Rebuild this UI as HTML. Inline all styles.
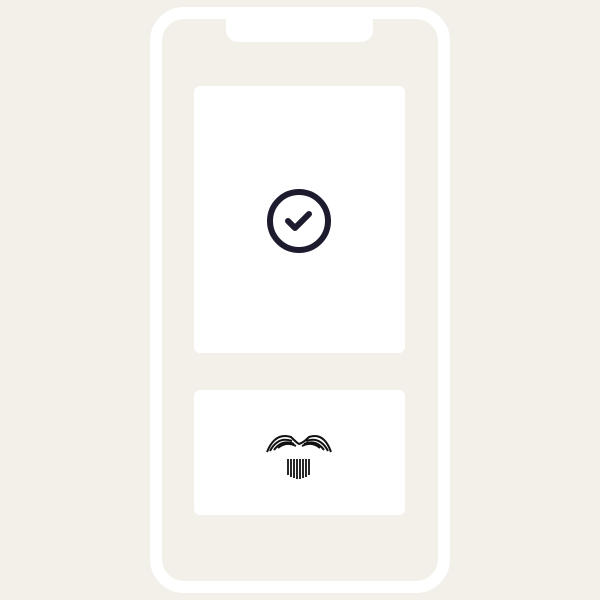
<!DOCTYPE html>
<html><head><style>
body{margin:0;width:600px;height:600px;background:#f3efe9;position:relative;overflow:hidden}
.phone{position:absolute;left:150px;top:7px;width:276px;height:562px;border:12px solid #fff;border-radius:34px;}
.notch{position:absolute;left:226px;top:19px;width:147px;height:23px;background:#fff;border-radius:0 0 12px 12px}
.c{position:absolute;background:#fff;border-radius:6px}
</style></head><body>
<div class="phone"></div>
<div class="notch"></div>
<div class="c" style="left:194px;top:86px;width:211px;height:267px"></div>
<div class="c" style="left:194px;top:390px;width:211px;height:125px"></div>
<svg style="position:absolute;left:0;top:0" width="600" height="600">
<circle cx="299" cy="221" r="29" fill="none" stroke="#1d1b2e" stroke-width="6"/>
<path d="M288 221 L295 228 L309 214" fill="none" stroke="#1d1b2e" stroke-width="6" stroke-linecap="round" stroke-linejoin="round"/>
<g fill="none" stroke="#111" stroke-width="2">
<path d="M267 452 Q275 432 291 437 Q297 443 299 444 Q303 443 309 437 Q324 432 331 452"/>
<path d="M270 451 Q278 436 292 441"/><path d="M274 450 Q282 439 294 444"/>
<path d="M278 448 Q286 441 296 446"/>
<path d="M328 451 Q320 436 306 441"/><path d="M324 450 Q316 439 304 444"/>
<path d="M320 448 Q312 441 302 446"/>
</g>
<g stroke="#111" stroke-width="1.8">
<path d="M288 459V475M291 459V477M294 459V478M297 459V479M300 459V479M303 459V478M306 459V477M309 459V475"/>
</g>
</svg>
</body></html>
